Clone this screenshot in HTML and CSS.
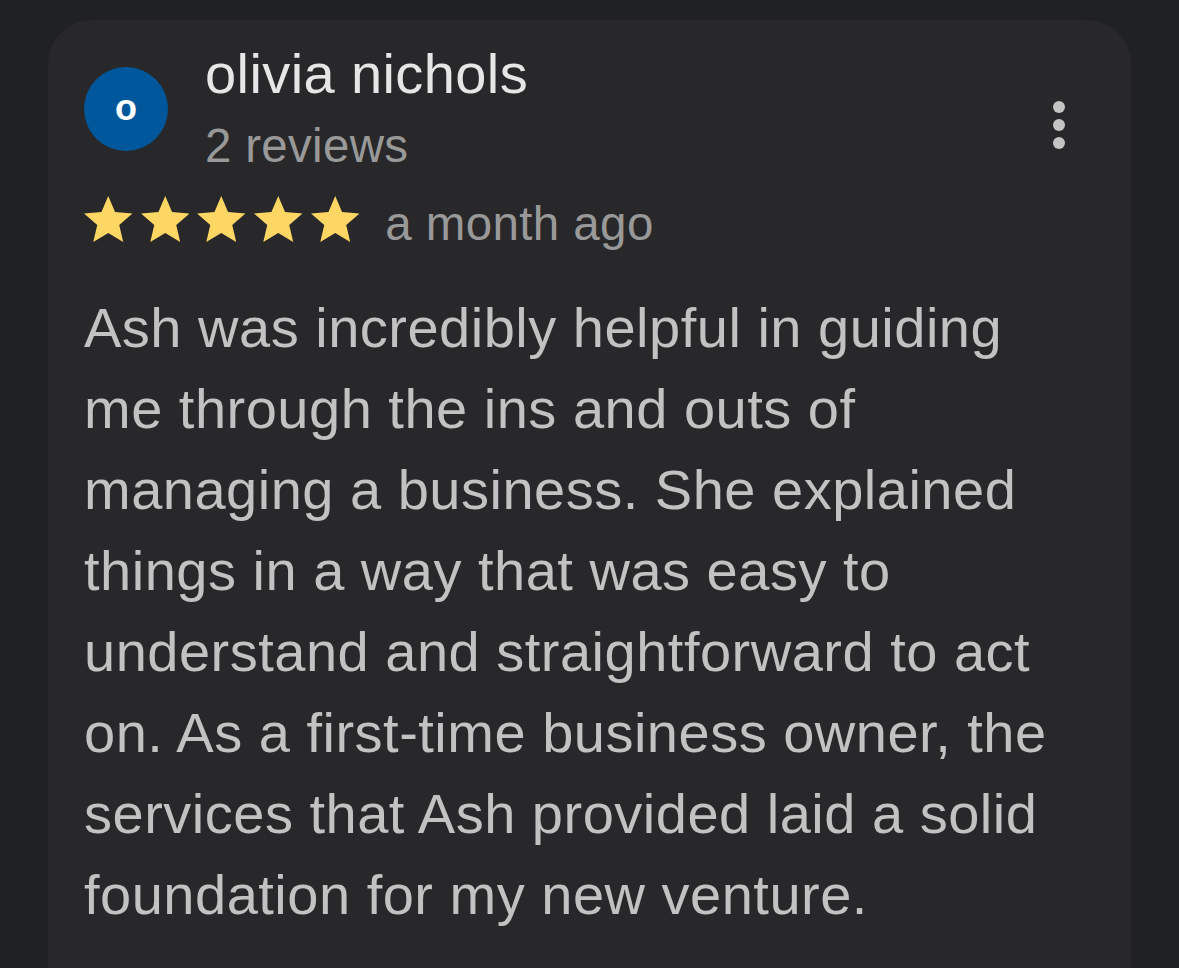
FILE: index.html
```html
<!DOCTYPE html>
<html>
<head>
<meta charset="utf-8">
<link rel="stylesheet" href="styles.css">
</head>
<body>
<div class="page">
  <div class="card">
    <div class="header">
      <div class="avatar">o</div>
      <div class="who">
        <div class="name">olivia nichols</div>
        <div class="count">2 reviews</div>
      </div>
      <div class="more" aria-label="More options">
        <span class="dot"></span><span class="dot"></span><span class="dot"></span>
      </div>
    </div>
    <div class="meta">
      <div class="stars">
        <svg class="star" viewBox="2 2 20 19"><path d="M12 17.27L18.18 21l-1.64-7.03L22 9.24l-7.19-.61L12 2 9.19 8.63 2 9.24l5.46 4.73L5.82 21z"/></svg>
        <svg class="star" viewBox="2 2 20 19"><path d="M12 17.27L18.18 21l-1.64-7.03L22 9.24l-7.19-.61L12 2 9.19 8.63 2 9.24l5.46 4.73L5.82 21z"/></svg>
        <svg class="star" viewBox="2 2 20 19"><path d="M12 17.27L18.18 21l-1.64-7.03L22 9.24l-7.19-.61L12 2 9.19 8.63 2 9.24l5.46 4.73L5.82 21z"/></svg>
        <svg class="star" viewBox="2 2 20 19"><path d="M12 17.27L18.18 21l-1.64-7.03L22 9.24l-7.19-.61L12 2 9.19 8.63 2 9.24l5.46 4.73L5.82 21z"/></svg>
        <svg class="star" viewBox="2 2 20 19"><path d="M12 17.27L18.18 21l-1.64-7.03L22 9.24l-7.19-.61L12 2 9.19 8.63 2 9.24l5.46 4.73L5.82 21z"/></svg>
      </div>
      <span class="when">a month ago</span>
    </div>
    <p class="body">Ash was incredibly helpful in guiding me through the ins and outs of managing a business. She explained things in a way that was easy to understand and straightforward to act on. As a first-time business owner, the services that Ash provided laid a solid foundation for my new venture.</p>
  </div>
</div>
</body>
</html>
```
FILE: styles.css
```css
html, body {
  margin: 0;
  padding: 0;
  background: #202124;
  height: 100%;
  overflow: hidden;
}
.page {
  padding: 20px 48px 0 48px;
  font-family: "Liberation Sans", Arial, Helvetica, sans-serif;
}
.card {
  background: #28282a;
  border-radius: 44px 44px 0 0;
  padding: 20px 56px 10px 36px;
  box-sizing: border-box;
  min-height: calc(100vh - 20px);
}
.header {
  display: flex;
  align-items: flex-start;
}
.avatar {
  width: 84px;
  height: 84px;
  border-radius: 50%;
  background: #01579b;
  color: #fff;
  font-size: 36px;
  font-weight: 700;
  line-height: 1;
  padding-bottom: 2px;
  box-sizing: border-box;
  display: flex;
  align-items: center;
  justify-content: center;
  margin-top: 27px;
  flex: none;
}
.who {
  margin-left: 37px;
  flex: 1;
}
.name {
  color: #e6e6e6;
  font-size: 56px;
  letter-spacing: 0.4px;
  line-height: 68px;
}
.count {
  color: #999999;
  font-size: 47.5px;
  letter-spacing: 0.3px;
  line-height: 68px;
  margin-top: 4px;
}
.more {
  display: flex;
  flex-direction: column;
  gap: 6px;
  margin-top: 61px;
  margin-right: 10px;
}
.dot {
  width: 12px;
  height: 12px;
  border-radius: 50%;
  background: #c4c4c4;
}
.meta {
  display: flex;
  align-items: flex-start;
  margin-top: 16px;
}
.stars {
  display: flex;
  gap: 8.2px;
}
.star {
  width: 48.5px;
  height: 46px;
  fill: #fdd663;
  display: block;
}
.when {
  color: #999999;
  font-size: 47.5px;
  letter-spacing: 0.4px;
  line-height: 56px;
  margin-left: 26px;
}
.body {
  margin: 34.5px 0 0 0;
  color: #c2c2c2;
  font-size: 56px;
  letter-spacing: 0.5px;
  line-height: 81px;
}
```
